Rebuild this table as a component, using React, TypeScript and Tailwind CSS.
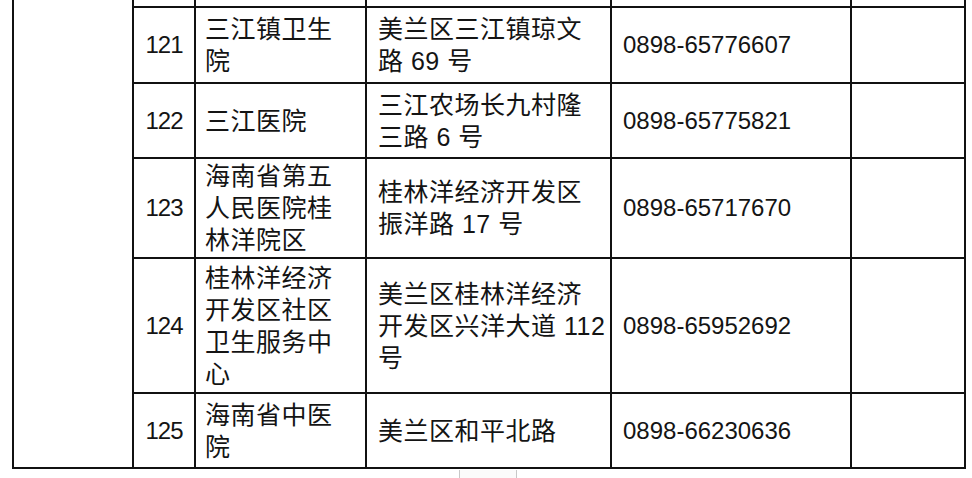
import React from "react";

type Row = {
  n: string;
  name: string[];
  addr: string[];
  phone: string;
};

const rows: Row[] = [
  { n: "121", name: ["三江镇卫生", "院"], addr: ["美兰区三江镇琼文", "路 69 号"], phone: "0898-65776607" },
  { n: "122", name: ["三江医院"], addr: ["三江农场长九村隆", "三路 6 号"], phone: "0898-65775821" },
  { n: "123", name: ["海南省第五", "人民医院桂", "林洋院区"], addr: ["桂林洋经济开发区", "振洋路 17 号"], phone: "0898-65717670" },
  { n: "124", name: ["桂林洋经济", "开发区社区", "卫生服务中", "心"], addr: ["美兰区桂林洋经济", "开发区兴洋大道 112", "号"], phone: "0898-65952692" },
  { n: "125", name: ["海南省中医", "院"], addr: ["美兰区和平北路"], phone: "0898-66230636" },
];

const cell = "border-r-2 border-b-2 border-[#111]";

export default function App() {
  return (
    <div
      className="w-[972px] h-[478px] overflow-hidden bg-white text-[#141414]"
      style={{ fontFamily: '"Liberation Sans", "Noto Sans CJK SC", sans-serif' }}
    >
      <div className="ml-[12px] w-[954px] border-l-2 border-[#111] grid grid-cols-[120px_62px_171px_245px_240px_114px] grid-rows-[8px_76px_75px_100px_135px_75px]">
        <div className={`${cell} col-start-1 row-start-1 row-span-6`} />
        {/* partial row above */}
        <div className={cell} />
        <div className={cell} />
        <div className={cell} />
        <div className={cell} />
        <div className={cell} />
        {rows.map((r) => (
          <React.Fragment key={r.n}>
            <div className={`${cell} flex items-center justify-center text-[24px] tracking-[-1px] leading-[32px]`}>
              {r.n}
            </div>
            <div className={`${cell} flex flex-col justify-center pl-[9px] text-[25px] tracking-[0.5px] leading-[32px]`}>
              {r.name.map((l, i) => (
                <div key={i} className="whitespace-pre">{l}</div>
              ))}
            </div>
            <div className={`${cell} flex flex-col justify-center pl-[11px] text-[25px] tracking-[0.5px] leading-[32px]`}>
              {r.addr.map((l, i) => (
                <div key={i} className="whitespace-pre">{l}</div>
              ))}
            </div>
            <div className={`${cell} flex items-center pl-[11px] text-[24px] leading-[32px]`}>
              {r.phone}
            </div>
            <div className={cell} />
          </React.Fragment>
        ))}
      </div>
      <div className="ml-[459px] mt-[1px] w-[58px] h-[9px] border-l border-r border-[#c8c8c8] bg-[#fbfbfb]" />
    </div>
  );
}
